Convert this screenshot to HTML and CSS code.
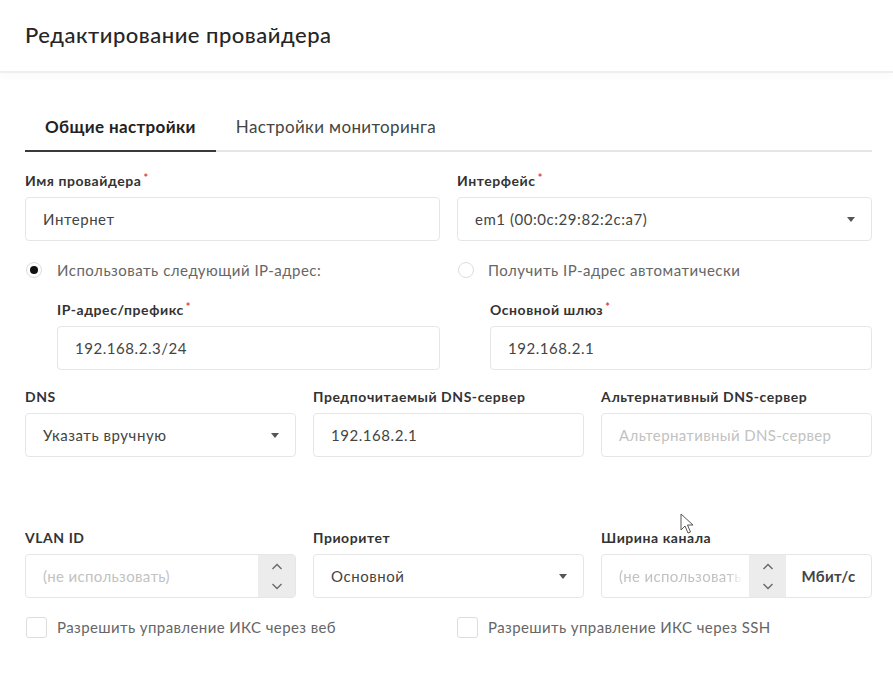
FILE: index.html
```html
<!DOCTYPE html>
<html lang="ru">
<head>
<meta charset="utf-8">
<title>Редактирование провайдера</title>
<link rel="stylesheet" href="styles.css">
</head>
<body>
<header class="title-bar"><h1 class="title">Редактирование провайдера</h1></header>
<main class="content">
  <nav class="tabs">
    <div class="tab tab-active">Общие настройки</div>
    <div class="tab">Настройки мониторинга</div>
  </nav>

  <div class="grid-2 row-first">
    <div class="field">
      <div class="label">Имя провайдера<span class="req">*</span></div>
      <div class="input"><span class="value">Интернет</span></div>
    </div>
    <div class="field">
      <div class="label">Интерфейс<span class="req">*</span></div>
      <div class="input select"><span class="value">em1 (00:0c:29:82:2c:a7)</span><span class="caret"></span></div>
    </div>
  </div>

  <div class="grid-2 row-radio">
    <label class="radio-line"><span class="radio radio-on"></span><span class="radio-text">Использовать следующий IP-адрес:</span></label>
    <label class="radio-line"><span class="radio"></span><span class="radio-text">Получить IP-адрес автоматически</span></label>
  </div>

  <div class="grid-2 row-sub">
    <div class="field indent">
      <div class="label">IP-адрес/префикс<span class="req">*</span></div>
      <div class="input"><span class="value">192.168.2.3/24</span></div>
    </div>
    <div class="field indent">
      <div class="label">Основной шлюз<span class="req">*</span></div>
      <div class="input"><span class="value">192.168.2.1</span></div>
    </div>
  </div>

  <div class="grid-3 row-dns">
    <div class="field">
      <div class="label">DNS</div>
      <div class="input select"><span class="value">Указать вручную</span><span class="caret"></span></div>
    </div>
    <div class="field">
      <div class="label">Предпочитаемый DNS-сервер</div>
      <div class="input"><span class="value">192.168.2.1</span></div>
    </div>
    <div class="field">
      <div class="label">Альтернативный DNS-сервер</div>
      <div class="input"><span class="placeholder">Альтернативный DNS-сервер</span></div>
    </div>
  </div>

  <div class="grid-3 row-vlan">
    <div class="field">
      <div class="label">VLAN ID</div>
      <div class="input number">
        <span class="placeholder grow">(не использовать)</span>
        <span class="spinner">
          <svg width="12" height="7" viewBox="0 0 12 7"><path d="M1.5 6 6 1.5 10.5 6" fill="none" stroke="#666" stroke-width="1.3"/></svg>
          <svg width="12" height="7" viewBox="0 0 12 7"><path d="M1.5 1 6 5.5 10.5 1" fill="none" stroke="#666" stroke-width="1.3"/></svg>
        </span>
      </div>
    </div>
    <div class="field">
      <div class="label">Приоритет</div>
      <div class="input select"><span class="value">Основной</span><span class="caret"></span></div>
    </div>
    <div class="field">
      <div class="label">Ширина канала</div>
      <div class="input number">
        <span class="placeholder grow clip">(не использовать)</span>
        <span class="spinner">
          <svg width="12" height="7" viewBox="0 0 12 7"><path d="M1.5 6 6 1.5 10.5 6" fill="none" stroke="#666" stroke-width="1.3"/></svg>
          <svg width="12" height="7" viewBox="0 0 12 7"><path d="M1.5 1 6 5.5 10.5 1" fill="none" stroke="#666" stroke-width="1.3"/></svg>
        </span>
        <span class="addon">Мбит/с</span>
      </div>
    </div>
  </div>

  <div class="grid-2 row-check">
    <label class="check-line"><span class="checkbox"></span><span class="check-text">Разрешить управление ИКС через веб</span></label>
    <label class="check-line"><span class="checkbox"></span><span class="check-text">Разрешить управление ИКС через SSH</span></label>
  </div>
</main>
<svg class="cursor" width="14" height="21" viewBox="0 0 14 21"><path d="M1 1v16l4-4 3 7 2.5-1-3-7h5.5z" fill="#fff" stroke="#555" stroke-width="1" stroke-linejoin="round"/></svg>
</body>
</html>
```

FILE: styles.css
```css
* { box-sizing: border-box; }
html, body { margin: 0; padding: 0; background: #fff; }
body {
  font-family: Lato, "Noto Sans", "Liberation Sans", sans-serif;
  color: #333;
  width: 893px;
  height: 691px;
  overflow: hidden;
  position: relative;
}

.title-bar {
  height: 73px;
  padding: 0 25px;
  display: flex;
  align-items: center;
  border-bottom: 2px solid #efefef;
  box-shadow: 0 4px 8px rgba(0, 0, 0, 0.025);
}
.title {
  margin: 0 0 3px;
  font-size: 22px;
  font-weight: 500;
  color: #262626;
  letter-spacing: 0.5px;
}

.content { padding: 0 21px 0 25px; }

.tabs {
  margin-top: 32px;
  display: flex;
  border-bottom: 2px solid #e6e6e6;
}
.tab {
  padding: 12px 20px 13px;
  font-size: 17px;
  line-height: 20px;
  letter-spacing: 0.35px;
  color: #444;
  margin-bottom: -2px;
  border-bottom: 2px solid transparent;
}
.tab-active {
  font-weight: 700;
  color: #222;
  border-bottom-color: #3a3a3a;
}

.grid-2 { display: grid; grid-template-columns: repeat(2, minmax(0, 1fr)); column-gap: 17px; }
.grid-3 { display: grid; grid-template-columns: repeat(3, minmax(0, 1fr)); column-gap: 17px; }
.field { min-width: 0; }

.row-first { margin-top: 21px; }
.row-radio { margin-top: 19px; }
.row-sub { margin-top: 22px; }
.row-dns { margin-top: 19px; }
.row-vlan { margin-top: 73px; }
.row-check { margin-top: 19px; }

.indent { padding-left: 32px; }
.row-sub .field:last-child { padding-left: 33px; }

.label {
  font-size: 14px;
  font-weight: 700;
  line-height: 16px;
  letter-spacing: 0.55px;
  color: #333;
  margin-bottom: 8px;
  white-space: nowrap;
}
.req {
  color: #e0423c;
  font-size: 11px;
  vertical-align: top;
  position: relative;
  top: -3px;
  margin-left: 2px;
}

.input {
  height: 44px;
  border: 1px solid #e6e6e6;
  border-radius: 4px;
  background: #fff;
  display: flex;
  align-items: center;
  padding: 0 17px;
  font-size: 15px;
  letter-spacing: 0.55px;
  color: #444;
  overflow: hidden;
}
.value { white-space: nowrap; }
.placeholder { color: #c2c2c2; white-space: nowrap; font-size: 15px; letter-spacing: 0.35px; }
.grow { flex: 1; min-width: 0; }
.clip {
  overflow: hidden;
  margin-right: 6px;
  -webkit-mask-image: linear-gradient(to right, #000 88%, transparent);
  mask-image: linear-gradient(to right, #000 88%, transparent);
}

.select { justify-content: space-between; padding-right: 16px; }
.caret {
  width: 0;
  height: 0;
  border-left: 4px solid transparent;
  border-right: 4px solid transparent;
  border-top: 5px solid #555;
}

.number { padding-right: 0; }
.spinner {
  width: 37px;
  flex: none;
  align-self: stretch;
  background: #ececec;
  display: flex;
  flex-direction: column;
  align-items: center;
  justify-content: center;
  gap: 13px;
}
.spinner svg { display: block; }
.addon {
  width: 85px;
  flex: none;
  align-self: stretch;
  display: flex;
  align-items: center;
  justify-content: center;
  font-weight: 700;
  color: #444;
  font-size: 15px;
  letter-spacing: 0.3px;
}

.radio-line, .check-line {
  display: flex;
  align-items: center;
  height: 20px;
  font-size: 15px;
  letter-spacing: 0.5px;
  color: #666;
  white-space: nowrap;
}
.radio-line { padding-left: 1px; }
.radio {
  width: 16px;
  height: 16px;
  flex: none;
  border-radius: 50%;
  border: 1px solid #ddd;
  background: #fff;
  display: flex;
  align-items: center;
  justify-content: center;
  margin-right: 15px;
}
.radio-on::after {
  content: "";
  width: 8px;
  height: 8px;
  border-radius: 50%;
  background: #111;
}
.row-radio .radio-line:last-child .radio { margin-right: 14px; }

.check-line { letter-spacing: 0.4px; padding-left: 1px; }
.checkbox {
  width: 21px;
  height: 21px;
  flex: none;
  border: 1px solid #ddd;
  border-radius: 3px;
  background: #fff;
  margin-right: 10px;
}
.row-check .check-line:last-child { padding-left: 0; }

.cursor { position: absolute; left: 680px; top: 513px; }
```
